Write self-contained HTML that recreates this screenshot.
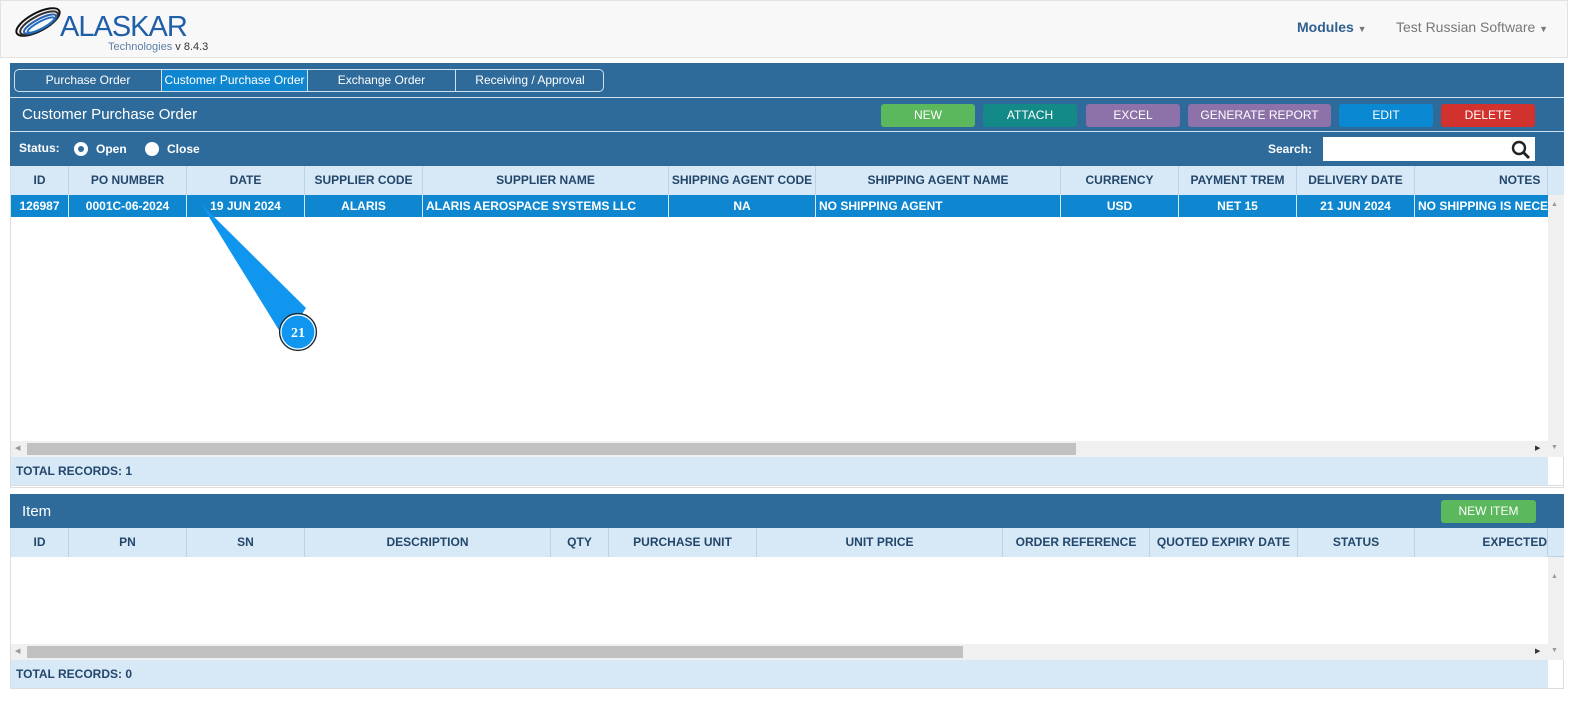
<!DOCTYPE html>
<html><head><style>
*{box-sizing:border-box;margin:0;padding:0}
body{width:1596px;height:702px;background:#fff;font-family:"Liberation Sans Narrow","Liberation Sans",Arial,sans-serif;position:relative;overflow:hidden;font-size:12px}
.a{position:absolute}
.hdr{left:0;top:0;width:1568px;height:58px;background:#f8f8f8;border:1px solid #e2e2e2}
.blue{background:#2e6b9b}
.tab{position:absolute;top:0;height:22px;line-height:21px;text-align:center;color:#fff;font-size:12px;border-right:1px solid #cfe0ee}
.btn{position:absolute;top:104px;height:23px;line-height:22px;text-align:center;color:#fff;font-size:12px;border-radius:3px}
.th{position:absolute;height:29px;line-height:29px;text-align:center;color:#23476b;font-weight:bold;font-size:12px;border-right:1px solid #b9d3ea;white-space:nowrap;overflow:hidden;background:#d7e9f7}
.td{position:absolute;height:22px;line-height:22px;text-align:center;color:#fff;font-weight:bold;font-size:12px;border-right:1px solid #d5e8f6;white-space:nowrap;overflow:hidden}
.sb{background:#f0f0f0}
.thumb{background:#c1c1c1}
.tot{color:#23476b;font-weight:bold;font-size:12px;line-height:28px;padding-left:5px;background:#d7e9f7}
</style></head><body>
<div class="a hdr"></div>
<svg class="a" style="left:10px;top:6px" width="56" height="36" viewBox="0 0 56 36">
<g fill="none" stroke-width="2">
<ellipse cx="28" cy="16" rx="24" ry="9" transform="rotate(-28 28 16)" stroke="#111"/>
<ellipse cx="29" cy="17" rx="21" ry="7" transform="rotate(-28 29 17)" stroke="#333"/>
<ellipse cx="30" cy="18" rx="18" ry="5" transform="rotate(-28 30 18)" stroke="#2a5fb0"/>
<ellipse cx="31" cy="19" rx="15" ry="3.5" transform="rotate(-28 31 19)" stroke="#1e6fc4"/>
</g></svg>
<div class="a" style="left:60px;top:12px;font-family:'Liberation Sans',sans-serif;font-size:29px;color:#1f5ea8;letter-spacing:-1px;line-height:30px">ALASKAR</div>
<div class="a" style="left:108px;top:41px;font-family:'Liberation Sans',sans-serif;font-size:11px;color:#5b7fa8">Technologies <span style="color:#333">v 8.4.3</span></div>
<div class="a" style="left:1297px;top:19px;font-family:'Liberation Sans',sans-serif;font-size:14px;color:#2e5f8f;font-weight:bold">Modules <span style="font-size:9px;color:#777">▼</span></div>
<div class="a" style="left:1396px;top:19px;font-family:'Liberation Sans',sans-serif;font-size:14px;color:#777">Test Russian Software <span style="font-size:9px">▼</span></div>

<!-- top panel -->
<div class="a blue" style="left:10px;top:63px;width:1554px;height:103px"></div>
<div class="a" style="left:14px;top:69px;width:590px;height:23px;border:1px solid #cfe0ee;border-radius:5px;overflow:hidden">
<div class="tab" style="left:0;width:147px">Purchase Order</div>
<div class="tab" style="left:147px;width:146px;background:#0e87d0">Customer Purchase Order</div>
<div class="tab" style="left:293px;width:148px">Exchange Order</div>
<div class="tab" style="left:441px;width:148px;border:none">Receiving / Approval</div>
</div>
<div class="a" style="left:10px;top:97px;width:1554px;height:1px;background:#cfe0ee"></div>
<div class="a" style="left:22px;top:106px;color:#fff;font-size:15px">Customer Purchase Order</div>
<div class="btn" style="left:881px;width:94px;background:#5cb85c">NEW</div>
<div class="btn" style="left:983px;width:94px;background:#138a87">ATTACH</div>
<div class="btn" style="left:1086px;width:94px;background:#8c72a8">EXCEL</div>
<div class="btn" style="left:1188px;width:143px;background:#8c72a8">GENERATE REPORT</div>
<div class="btn" style="left:1339px;width:94px;background:#0a88d2">EDIT</div>
<div class="btn" style="left:1441px;width:94px;background:#d2322d">DELETE</div>
<div class="a" style="left:10px;top:131px;width:1554px;height:1px;background:#cfe0ee"></div>
<div class="a" style="left:19px;top:141px;color:#fff;font-weight:bold;font-size:12px">Status:</div>
<div class="a" style="left:74px;top:142px;width:14px;height:14px;border-radius:50%;background:#fff"><div class="a" style="left:4px;top:4px;width:6px;height:6px;border-radius:50%;background:#2e6b9b"></div></div>
<div class="a" style="left:96px;top:142px;color:#fff;font-weight:bold;font-size:12px">Open</div>
<div class="a" style="left:145px;top:142px;width:14px;height:14px;border-radius:50%;background:#fff"></div>
<div class="a" style="left:167px;top:142px;color:#fff;font-weight:bold;font-size:12px">Close</div>
<div class="a" style="left:1268px;top:142px;color:#fff;font-weight:bold;font-size:12px">Search:</div>
<div class="a" style="left:1323px;top:137px;width:212px;height:24px;background:#fff"></div>
<svg class="a" style="left:1511px;top:140px" width="20" height="20" viewBox="0 0 20 20"><circle cx="8" cy="8" r="6" fill="none" stroke="#222" stroke-width="2.4"/><path d="M12.5 12.5L18 18" stroke="#222" stroke-width="2.8"/></svg>

<!-- grid 1 -->
<div class="a" style="left:10px;top:166px;width:1554px;height:322px;border:1px solid #ddd;border-top:none"></div>
<div class="a" style="left:11px;top:166px;width:1553px;height:29px;background:#d7e9f7"></div>
<div class="th" style="left:11px;top:166px;width:58px">ID</div>
<div class="th" style="left:69px;top:166px;width:118px">PO NUMBER</div>
<div class="th" style="left:187px;top:166px;width:118px">DATE</div>
<div class="th" style="left:305px;top:166px;width:118px">SUPPLIER CODE</div>
<div class="th" style="left:423px;top:166px;width:246px">SUPPLIER NAME</div>
<div class="th" style="left:669px;top:166px;width:147px">SHIPPING AGENT CODE</div>
<div class="th" style="left:816px;top:166px;width:245px">SHIPPING AGENT NAME</div>
<div class="th" style="left:1061px;top:166px;width:118px">CURRENCY</div>
<div class="th" style="left:1179px;top:166px;width:118px">PAYMENT TREM</div>
<div class="th" style="left:1297px;top:166px;width:118px">DELIVERY DATE</div>
<div class="th" style="left:1415px;top:166px;width:133px;text-align:right;padding-right:0">NOTES&nbsp;&nbsp;</div>
<div class="a" style="left:11px;top:195px;width:1537px;height:22px;background:#0e87d0"></div>
<div class="td" style="left:11px;top:195px;width:58px">126987</div>
<div class="td" style="left:69px;top:195px;width:118px">0001C-06-2024</div>
<div class="td" style="left:187px;top:195px;width:118px">19 JUN 2024</div>
<div class="td" style="left:305px;top:195px;width:118px">ALARIS</div>
<div class="td" style="left:423px;top:195px;width:246px;text-align:left;padding-left:3px">ALARIS AEROSPACE SYSTEMS LLC</div>
<div class="td" style="left:669px;top:195px;width:147px">NA</div>
<div class="td" style="left:816px;top:195px;width:245px;text-align:left;padding-left:3px">NO SHIPPING AGENT</div>
<div class="td" style="left:1061px;top:195px;width:118px">USD</div>
<div class="td" style="left:1179px;top:195px;width:118px">NET 15</div>
<div class="td" style="left:1297px;top:195px;width:118px">21 JUN 2024</div>
<div class="td" style="left:1415px;top:195px;width:133px;text-align:left;padding-left:3px;border:none">NO SHIPPING IS NECESSARY</div>
<div class="a sb" style="left:1548px;top:195px;width:16px;height:246px"></div>
<div class="a" style="left:1551px;top:201px;font-size:7px;color:#999">▲</div>
<div class="a sb" style="left:11px;top:441px;width:1553px;height:16px"></div>
<div class="a thumb" style="left:27px;top:443px;width:1049px;height:12px"></div>
<div class="a" style="left:15px;top:444px;font-size:7px;color:#999">◀</div>
<div class="a" style="left:1535px;top:444px;font-size:7px;color:#333">▶</div>
<div class="a" style="left:1551px;top:444px;font-size:7px;color:#999">▼</div>
<div class="a tot" style="left:11px;top:457px;width:1537px;height:28px">TOTAL RECORDS: 1</div>
<div class="a" style="left:11px;top:485px;width:1553px;height:1px;background:#ddd"></div>

<!-- callout -->
<svg class="a" style="left:190px;top:195px" width="140" height="165" viewBox="0 0 140 165">
<path d="M11 9 L116 113 L95 145 Z" fill="#1196ef"/>
<circle cx="108" cy="137" r="18.5" fill="#1196ef" stroke="#222" stroke-width="1.2"/>
<circle cx="108" cy="137" r="17" fill="none" stroke="#fff" stroke-width="1.2"/>
<text x="108" y="142" text-anchor="middle" fill="#fff" font-family="Liberation Serif,serif" font-weight="bold" font-size="14">21</text>
</svg>

<!-- item panel -->
<div class="a blue" style="left:10px;top:494px;width:1554px;height:34px"></div>
<div class="a" style="left:22px;top:503px;color:#fff;font-size:15px">Item</div>
<div class="btn" style="left:1441px;top:500px;width:95px;background:#5cb85c">NEW ITEM</div>
<div class="a" style="left:10px;top:528px;width:1554px;height:161px;border:1px solid #ddd;border-top:none"></div>
<div class="a" style="left:11px;top:528px;width:1553px;height:29px;background:#d7e9f7;border-bottom:1px solid #b9d3ea"></div>
<div class="th" style="left:11px;top:528px;width:58px">ID</div>
<div class="th" style="left:69px;top:528px;width:118px">PN</div>
<div class="th" style="left:187px;top:528px;width:118px">SN</div>
<div class="th" style="left:305px;top:528px;width:246px">DESCRIPTION</div>
<div class="th" style="left:551px;top:528px;width:58px">QTY</div>
<div class="th" style="left:609px;top:528px;width:148px">PURCHASE UNIT</div>
<div class="th" style="left:757px;top:528px;width:246px">UNIT PRICE</div>
<div class="th" style="left:1003px;top:528px;width:147px">ORDER REFERENCE</div>
<div class="th" style="left:1150px;top:528px;width:148px">QUOTED EXPIRY DATE</div>
<div class="th" style="left:1298px;top:528px;width:117px">STATUS</div>
<div class="th" style="left:1415px;top:528px;width:133px;text-align:right">EXPECTED</div>
<div class="a sb" style="left:1548px;top:557px;width:16px;height:87px"></div>
<div class="a" style="left:1551px;top:573px;font-size:7px;color:#999">▲</div>
<div class="a sb" style="left:11px;top:644px;width:1553px;height:16px"></div>
<div class="a thumb" style="left:27px;top:646px;width:936px;height:12px"></div>
<div class="a" style="left:15px;top:647px;font-size:7px;color:#999">◀</div>
<div class="a" style="left:1535px;top:647px;font-size:7px;color:#333">▶</div>
<div class="a" style="left:1551px;top:647px;font-size:7px;color:#999">▼</div>
<div class="a tot" style="left:11px;top:660px;width:1537px;height:28px">TOTAL RECORDS: 0</div>
</body></html>
